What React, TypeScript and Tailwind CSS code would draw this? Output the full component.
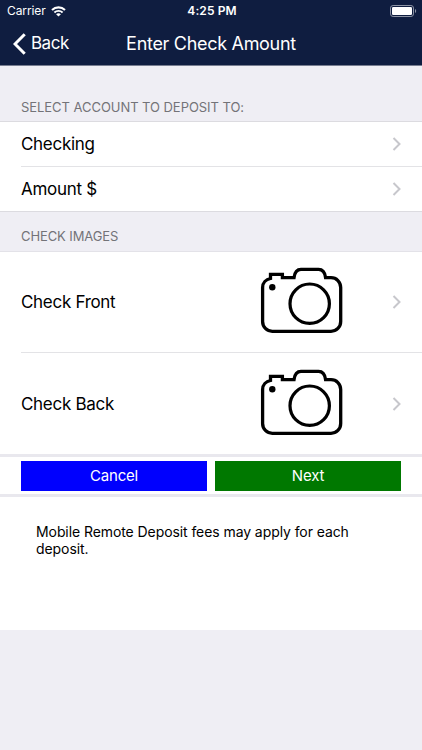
import React from "react";

const Chevron = () => (
  <svg width="10" height="14" viewBox="0 0 10 14" fill="none">
    <path d="M1.5 1L7.5 7L1.5 13" stroke="#c7c7cc" strokeWidth="2" />
  </svg>
);

const Camera = () => (
  <svg width="84" height="68" viewBox="0 0 84 68" fill="none">
    <path
      d="M10.5 11.5V7.4H22.4V10.7H34C34.6 6 36.5 2.4 41 2.4H58.5C63 2.4 65 6 65.6 10.7H71C76.5 10.7 80.7 15 80.7 20.5V54.5C80.7 60 76.5 64.3 71 64.3H12.3C6.8 64.3 2.6 60 2.6 54.5V20.5C2.6 16 6 12.4 10.5 11.5Z"
      stroke="#000"
      strokeWidth="3.3"
    />
    <circle cx="49.7" cy="36.7" r="19.7" stroke="#000" strokeWidth="3.2" />
    <circle cx="12.3" cy="20.3" r="3.2" fill="#000" />
  </svg>
);

const Wifi = () => (
  <svg width="15" height="11" viewBox="0 0 15 11" fill="none">
    <path d="M1 4.1C4.7 0.5 10.3 0.5 14 4.1" stroke="#fff" strokeWidth="2.1" />
    <path d="M3.4 6.5C5.7 4.3 9.3 4.3 11.6 6.5" stroke="#fff" strokeWidth="1.9" />
    <path d="M7.5 10.6L5.1 8.2C6.4 7 8.6 7 9.9 8.2Z" fill="#fff" />
  </svg>
);

const Battery = () => (
  <svg width="27" height="12" viewBox="0 0 27 12" fill="none">
    <rect x="0.5" y="0.5" width="23" height="11" rx="2.6" stroke="#8d94a5" />
    <rect x="2" y="2" width="20" height="8" rx="1.2" fill="#fff" />
    <path d="M25 4C26.6 4.6 26.6 7.4 25 8Z" fill="#8d94a5" />
  </svg>
);

const accountRows = ["Checking", "Amount $"];
const imageRows = ["Check Front", "Check Back"];

export default function App() {
  return (
    <div className="flex h-[750px] w-[422px] flex-col overflow-hidden bg-[#efeef4] font-['Inter','Liberation_Sans',sans-serif] text-black">
      <header className="h-[66px] shrink-0 border-b border-[#777d90] bg-[#0f1d40] text-white">
        <div className="grid h-[22px] grid-cols-3 items-center pl-[7px] pr-[5px] text-[12px]">
          <div className="flex items-center gap-[5px]">
            <span className="tracking-[-0.1px]">Carrier</span>
            <Wifi />
          </div>
          <span className="text-center font-semibold tracking-[0.1px]">4:25 PM</span>
          <div className="flex justify-end">
            <Battery />
          </div>
        </div>
        <div className="grid h-[43px] grid-cols-[100px_1fr_100px] items-center">
          <button className="flex items-center gap-[5px] pl-[13px]">
            <svg width="13" height="22" viewBox="0 0 13 22" fill="none">
              <path d="M11.7 1.2L2 11L11.7 20.8" stroke="#fff" strokeWidth="3" />
            </svg>
            <span className="text-[17px] tracking-[-0.5px]">Back</span>
          </button>
          <h1 className="whitespace-nowrap text-center text-[18px] tracking-[-0.3px]">Enter Check Amount</h1>
        </div>
      </header>

      <h2 className="flex h-[56px] shrink-0 items-end border-b border-[#dcdbe0] pb-[5px] pl-[21px] text-[13px] leading-[18px] tracking-[-0.05px] text-[#737378]">
        SELECT ACCOUNT TO DEPOSIT TO:
      </h2>
      <section className="shrink-0 bg-white">
        {accountRows.map((label, index) => (
          <div key={label} className={index === 0 ? "pl-[21px]" : "border-b border-[#dcdbe0] pl-[21px]"}>
            <div
              className={
                index === 0
                  ? "flex h-[45px] items-center justify-between border-b border-[#e3e3e6] pr-5"
                  : "flex h-[44px] items-center justify-between pr-5"
              }
            >
              <span className="pt-[2px] text-[17px] tracking-[-0.3px]">{label}</span>
              <Chevron />
            </div>
          </div>
        ))}
      </section>

      <h2 className="flex h-[40px] shrink-0 items-end border-b border-[#e3e2e8] pb-[6px] pl-[21px] text-[13px] leading-[18px] tracking-[-0.1px] text-[#737378]">
        CHECK IMAGES
      </h2>
      <section className="shrink-0 bg-white pl-[21px]">
        {imageRows.map((label, index) => (
          <div
            key={label}
            className={
              index === 0
                ? "flex h-[101px] items-center border-b border-[#e3e3e6] pr-5"
                : "flex h-[101px] items-center pr-5"
            }
          >
            <span className="w-[239px] pt-[2px] text-[17px] tracking-[-0.3px]">{label}</span>
            <div className="pb-[2px]">
              <Camera />
            </div>
            <span className="ml-auto">
              <Chevron />
            </span>
          </div>
        ))}
      </section>

      <div className="shrink-0 border-y-[3px] border-[#e9e8ee] bg-white px-[21px] pb-[3px] pt-[4px]">
        <div className="grid grid-cols-2 gap-2 text-[15px] tracking-[-0.2px] text-white">
          <button className="h-[30px] bg-[#0000fe] pt-px">Cancel</button>
          <button className="h-[30px] bg-[#007800] pt-px">Next</button>
        </div>
      </div>

      <div className="h-[133px] shrink-0 bg-white px-9 pt-[26px]">
        <p className="text-[14px] leading-[17px] tracking-[-0.08px]">
          Mobile Remote Deposit fees may apply for each deposit.
        </p>
      </div>
    </div>
  );
}
